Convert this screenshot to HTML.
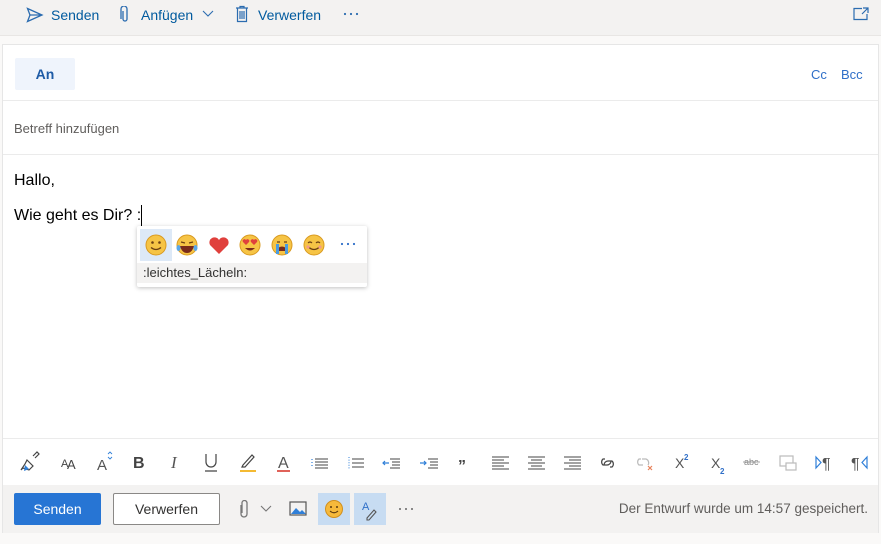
<!DOCTYPE html>
<html><head><meta charset="utf-8"><style>
*{box-sizing:border-box;margin:0;padding:0}
body{width:881px;height:544px;background:#faf9f8;font-family:"Liberation Sans",sans-serif;position:relative;overflow:hidden;color:#323130}
.abs{position:absolute}
.top{left:0;top:0;width:881px;height:36px;background:#f3f2f1;border-bottom:1px solid #e8e6e4}
.tb{color:#005a9e;font-size:14px;top:7px}
.panel{left:2px;top:44px;width:877px;height:489px;background:#fff;border:1px solid #e6e6e6}
.hr{height:1px;background:#ebebeb;left:0;width:875px}
.bot{left:0;top:440px;width:875px;height:48px;background:#f3f2f1}
</style></head><body>
<div class="abs top"></div>
<svg class="abs" style="left:26px;top:7px" width="18" height="16" viewBox="0 0 18 16"><path d="M1.5 1.5L16 8 1.5 14.5 4 8z M4 8h12" fill="none" stroke="#2b6cb0" stroke-width="1.3"/></svg>
<div class="abs tb" style="left:51px">Senden</div>
<svg class="abs" style="left:120px;top:6px" width="10" height="18" viewBox="0 0 10 18"><path d="M3 5v8a2 2 0 004 0V3a3 3 0 00-6 0v10" fill="none" stroke="#2b6cb0" stroke-width="1.3"/></svg>
<div class="abs tb" style="left:141px">Anfügen</div>
<svg class="abs" style="left:202px;top:10px" width="12" height="8"><path d="M1 1l5 5 5-5" fill="none" stroke="#2b6cb0" stroke-width="1.1"/></svg>
<svg class="abs" style="left:235px;top:5px" width="14" height="18" viewBox="0 0 14 18"><path d="M1 3h12M5 3V1.5h4V3M2.5 3v13.5h9V3M5 6v8M7 6v8M9 6v8" fill="none" stroke="#2b6cb0" stroke-width="1.2"/></svg>
<div class="abs tb" style="left:258px">Verwerfen</div>
<svg class="abs" style="left:343px;top:12px" width="18" height="4"><g fill="#2b6cb0"><circle cx="2" cy="2" r="1.1"/><circle cx="8" cy="2" r="1.1"/><circle cx="14" cy="2" r="1.1"/></g></svg>
<svg class="abs" style="left:853px;top:7px" width="16" height="14"><path d="M9 1.5H1v11h13V7M10 1h5v5M15 1l-6 6" fill="none" stroke="#2b6cb0" stroke-width="1.2"/></svg>

<div class="abs panel">
 <div class="abs" style="left:12px;top:13px;width:60px;height:32px;background:#eff4fc;border-radius:2px;color:#1e5ba6;font-size:14px;font-weight:bold;text-align:center;line-height:32px">An</div>
 <div class="abs" style="left:808px;top:22px;color:#2f6fc8;font-size:13px">Cc</div>
 <div class="abs" style="left:838px;top:22px;color:#2f6fc8;font-size:13px">Bcc</div>
 <div class="abs hr" style="top:55px"></div>
 <div class="abs" style="left:11px;top:76px;font-size:13px;color:#605e5c">Betreff hinzufügen</div>
 <div class="abs hr" style="top:109px"></div>
 <div class="abs" style="left:11px;top:127px;font-size:16px;color:#000">Hallo,</div>
 <div class="abs" style="left:11px;top:162px;font-size:16px;color:#000">Wie geht es Dir? :</div>
 <div class="abs" style="left:138px;top:160px;width:1px;height:21px;background:#000"></div>
 <div class="abs hr" style="top:393px"></div>
 <div class="abs bot"></div>
</div>

<div class="abs" style="left:137px;top:226px;width:230px;height:61px;background:#fff;box-shadow:0 1px 4px rgba(0,0,0,.25);border-radius:2px">
 <div class="abs" style="left:3px;top:3px;width:32px;height:32px;background:#dde9f7"></div>
 <svg class="abs" style="left:0;top:0" width="230" height="38">
  <g><circle cx="19" cy="19" r="10" fill="#f6c445" stroke="#d99a21"/><circle cx="15.5" cy="16.5" r="1.3" fill="#6b3f12"/><circle cx="22.5" cy="16.5" r="1.3" fill="#6b3f12"/><path d="M14 21.5q5 4 10 0" fill="none" stroke="#6b3f12" stroke-width="1.3"/></g>
  <g><circle cx="50" cy="19" r="10" fill="#f6c445" stroke="#d99a21"/><path d="M44 16l4 1M56 16l-4 1" stroke="#6b3f12" stroke-width="1.3"/><path d="M43 20h14q-2 7-7 7t-7-7z" fill="#7a2b1a"/><ellipse cx="41.5" cy="22" rx="2" ry="3" fill="#5aa7e8"/><ellipse cx="58.5" cy="22" rx="2" ry="3" fill="#5aa7e8"/></g>
  <path d="M82 28L73 19a5 5 0 019-5 5 5 0 019 5z" fill="#e0403c"/>
  <g><circle cx="113" cy="19" r="10" fill="#f6c445" stroke="#d99a21"/><path d="M109 19l-3-3a1.8 1.8 0 013-2 1.8 1.8 0 013 2zM117 19l-3-3a1.8 1.8 0 013-2 1.8 1.8 0 013 2z" fill="#e0403c"/><path d="M108 22q5 5 10 0z" fill="#7a2b1a"/></g>
  <g><circle cx="145" cy="19" r="10" fill="#f6c445" stroke="#d99a21"/><path d="M140 16h3M147 16h3" stroke="#6b3f12" stroke-width="1.3"/><path d="M141 22q4-3 8 0v3h-8z" fill="#7a2b1a"/><rect x="139" y="18" width="3" height="10" fill="#4a9be0"/><rect x="148" y="18" width="3" height="10" fill="#4a9be0"/></g>
  <g><circle cx="177" cy="19" r="10" fill="#f6c445" stroke="#d99a21"/><path d="M171 17q2-2 4 0M179 17q2-2 4 0" fill="none" stroke="#6b3f12" stroke-width="1.2"/><path d="M172 21.5q5 4 10 0" fill="none" stroke="#6b3f12" stroke-width="1.3"/><circle cx="171" cy="21" r="1.6" fill="#f29a8a"/><circle cx="183" cy="21" r="1.6" fill="#f29a8a"/></g>
  <g fill="#2f6fc8"><circle cx="205" cy="18" r="1.1"/><circle cx="211" cy="18" r="1.1"/><circle cx="217" cy="18" r="1.1"/></g>
 </svg>
 <div class="abs" style="left:0;top:37px;width:230px;height:20px;background:#f3f2f1;font-size:13px;padding-left:6px;line-height:20px">:leichtes_Lächeln:</div>
</div>

<svg class="abs" style="left:0;top:448px" width="881" height="28" viewBox="0 0 881 28" fill="none" stroke="#444" stroke-width="1.2" font-family="Liberation Sans">
 <path d="M27 12l6 6-4 4-6-2-2 2 4-6zM33 8l4-4 2 2-4 4" /><path d="M25 17l4 4 -5 2z" fill="#2f7fd8" stroke="none"/>
 <text x="61" y="19" font-size="11" fill="#444" stroke="none">A</text><text x="67" y="21" font-size="13" fill="#444" stroke="none">A</text>
 <text x="97" y="22" font-size="15" fill="#555" stroke="none">A</text><path d="M108 6l2-2 2 2M108 9l2 2 2-2" stroke="#2f7fd8" stroke-width=".9"/>
 <text x="133" y="20" font-size="16" font-weight="bold" fill="#444" stroke="none">B</text>
 <text x="171" y="20" font-size="17" font-style="italic" fill="#555" stroke="none" font-family="Liberation Serif">I</text>
 <path d="M206 6v8a5 5 0 0010 0V6M205 23h12"/>
 <path d="M243 17l9-10 2 2-9 10h-3z"/><path d="M240 23h16" stroke="#f2a900" stroke-width="1.6"/>
 <text x="278" y="20" font-size="16" fill="#555" stroke="none">A</text><path d="M277 23h13" stroke="#d83b30" stroke-width="1.6"/>
 <path d="M315 11h13M315 14h13M315 17h13M315 20h13" stroke-width="1"/><path d="M312 11v9" stroke="#2f7fd8" stroke-dasharray="1 2"/>
 <path d="M352 11h12M352 15h12M352 19h12" stroke-width="1.1"/><path d="M349 9v12" stroke="#2f7fd8" stroke-dasharray="1 1.6" stroke-width="1"/>
 <path d="M390 11h10M392 14h8M392 17h8M390 20h10" stroke-width="1"/><path d="M389 15h-6m2-2l-2 2 2 2" stroke="#2f7fd8"/>
 <path d="M428 11h10M430 14h8M430 17h8M428 20h10" stroke-width="1"/><path d="M420 15h6m-2-2l2 2-2 2" stroke="#2f7fd8"/>
 <text x="458" y="23" font-size="16" font-weight="bold" fill="#444" stroke="none">”</text>
 <path d="M492 9h17M492 12h12M492 15h17M492 18h12M492 21h17" stroke-width="1"/>
 <path d="M528 9h17M531 12h11M528 15h17M531 18h11M528 21h17" stroke-width="1"/>
 <path d="M564 9h17M569 12h12M564 15h17M569 18h12M564 21h17" stroke-width="1"/>
 <path d="M605 11h-2a4 4 0 000 6h4a4 4 0 004-4M610 19h2a4 4 0 000-6h-4a4 4 0 00-4 4"/>
 <path d="M641 11h-2a4 4 0 000 6h4M648 17a4 4 0 00-2-6h-4" stroke="#bbb"/><path d="M648 18l4 4m0-4l-4 4" stroke="#e8825b"/>
 <text x="675" y="20" font-size="14" fill="#555" stroke="none">X</text><text x="684" y="12" font-size="8" font-weight="bold" fill="#2f6fc8" stroke="none">2</text>
 <text x="711" y="20" font-size="14" fill="#555" stroke="none">X</text><text x="720" y="26" font-size="8" font-weight="bold" fill="#2f6fc8" stroke="none">2</text>
 <text x="744" y="17" font-size="9" fill="#888" stroke="none">abc</text><path d="M743 14h17" stroke="#888" stroke-width=".8"/>
 <rect x="780" y="8" width="13" height="10" stroke="#bbb"/><rect x="786" y="15" width="10" height="7" stroke="#bbb" fill="#fff"/>
 <path d="M816 9v11l5-5.5z" stroke="#2f7fd8"/><text x="822" y="21" font-size="16" fill="#555" stroke="none">¶</text>
 <text x="851" y="21" font-size="16" fill="#555" stroke="none">¶</text><path d="M867 9v11l-5-5.5z" stroke="#2f7fd8"/>
</svg>

<div class="abs" style="left:14px;top:493px;width:87px;height:32px;background:#2775d4;border-radius:2px;color:#fff;font-size:14px;text-align:center;line-height:32px">Senden</div>
<div class="abs" style="left:113px;top:493px;width:107px;height:32px;background:#fff;border:1px solid #8a8886;border-radius:2px;color:#323130;font-size:14px;text-align:center;line-height:30px">Verwerfen</div>
<svg class="abs" style="left:238px;top:500px" width="12" height="20" viewBox="0 0 12 20"><path d="M3 5v9a3 3 0 006 0V3a2.5 2.5 0 00-5 0v10" fill="none" stroke="#777" stroke-width="1.3"/></svg>
<svg class="abs" style="left:260px;top:505px" width="12" height="8"><path d="M1 1l5 5 5-5" fill="none" stroke="#777" stroke-width="1.1"/></svg>
<svg class="abs" style="left:289px;top:501px" width="18" height="15"><rect x="1" y="1" width="16" height="13" fill="none" stroke="#555" stroke-width="1.2"/><path d="M2 13l5-6 4 4 2-2 4 4z" fill="#2f7fd8"/></svg>
<div class="abs" style="left:318px;top:493px;width:32px;height:32px;background:#c7dcf2"></div>
<svg class="abs" style="left:324px;top:499px" width="20" height="20"><circle cx="10" cy="10" r="8.5" fill="#f6b93b" stroke="#d18f1d"/><circle cx="7" cy="8" r="1" fill="#5c3b0f"/><circle cx="13" cy="8" r="1" fill="#5c3b0f"/><path d="M6 12q4 3.5 8 0" fill="none" stroke="#5c3b0f" stroke-width="1.1"/></svg>
<div class="abs" style="left:354px;top:493px;width:32px;height:32px;background:#c7dcf2"></div>
<svg class="abs" style="left:360px;top:499px" width="20" height="22"><text x="2" y="11" font-size="11" fill="#2f6fc8" font-family="Liberation Sans">A</text><path d="M7 19l7-8 2 2-7 8H7z" fill="none" stroke="#555" stroke-width="1.1"/></svg>
<svg class="abs" style="left:398px;top:507px" width="18" height="4"><g fill="#666"><circle cx="2" cy="2" r="1"/><circle cx="8" cy="2" r="1"/><circle cx="14" cy="2" r="1"/></g></svg>
<div class="abs" style="right:13px;top:501px;color:#605e5c;font-size:13.5px">Der Entwurf wurde um 14:57 gespeichert.</div>
</body></html>
